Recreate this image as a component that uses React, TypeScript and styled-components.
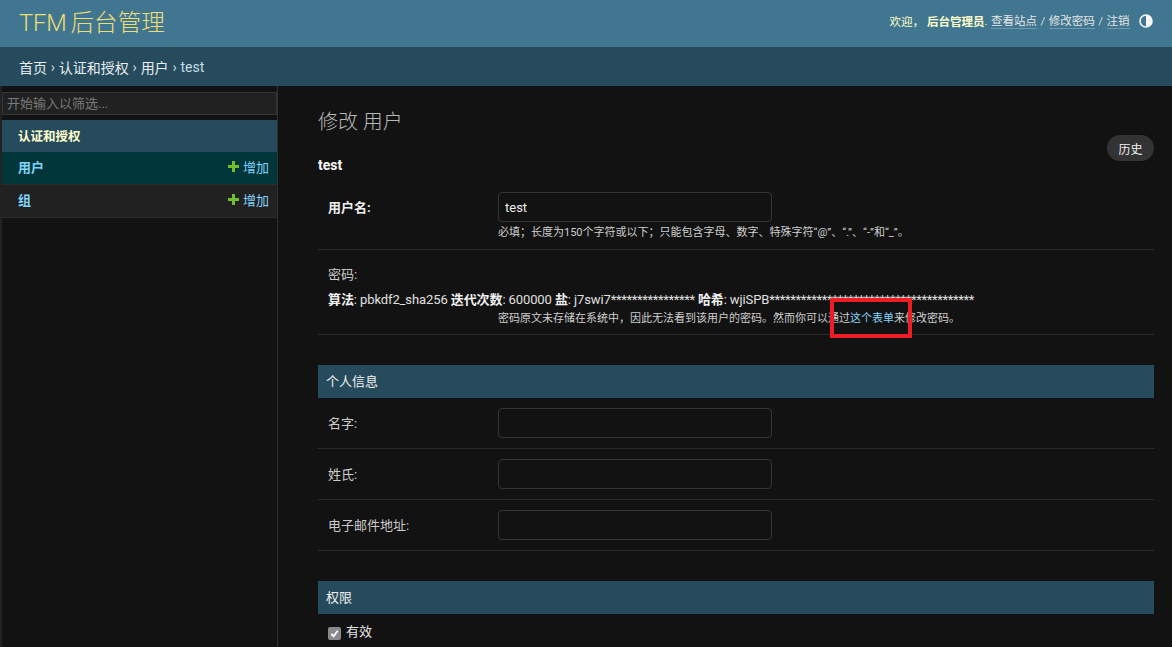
import React from "react";
import styled, { createGlobalStyle } from "styled-components";

const Global = createGlobalStyle`
  html, body { margin: 0; padding: 0; height: 100%; background: #121212; overflow: hidden; }
  body { font-family: Roboto, "Noto Sans CJK SC", "Liberation Sans", sans-serif; font-size: 14px; color: #eeeeee; }
  * { box-sizing: border-box; }
`;
const Page = styled.div`position: relative; width: 1172px; height: 647px; overflow: hidden; display: flex; flex-direction: column;`;
const Header = styled.header`
  height: 47px; flex: none; background: #417690; display: flex; align-items: center; justify-content: space-between;
  padding: 0 19px;
`;
const Brand = styled.div`font-size: 23.6px; font-weight: 300; color: #f0dd75; line-height: 47px; word-spacing: -2px;`;
const UserTools = styled.div`display: flex; align-items: center; font-size: 11.5px; color: #ffc; padding-bottom: 5px;`;
const UserStrong = styled.strong`font-weight: 700; margin-left: 3px;`;
const ToolLink = styled.a`color: #e6e6e6; border-bottom: 1px solid rgba(255,255,255,0.25); line-height: 14px; margin: 0 3.5px;`;
const Sep = styled.span`color: #ddd;`;
const ThemeIcon = styled.svg`width: 14px; height: 14px; margin-left: 6px;`;
const Crumbs = styled.nav`height: 39px; flex: none; background: #264b5d; padding: 0 19px; display: flex; align-items: center; font-size: 14px; color: #c4dce8; gap: 3.8px;`;
const CrumbLink = styled.a`color: #e8eef2;`;
const Body = styled.div`flex: 1; display: flex; min-height: 0;`;
const Sidebar = styled.aside`width: 278px; flex: none; padding: 6px 0 0; border-left: 2px solid #222222; border-right: 1px solid #2f2f2f; background: #121212;`;
const Filter = styled.input`
  display: block; width: 275px; height: 23px; background: #212121; border: 1px solid #353535; color: #eee;
  padding: 0 4px; font: inherit; font-size: 13px; margin-bottom: 5px; outline: none;
  &::placeholder { color: #7a7a7a; opacity: 1; }
`;
const Caption = styled.div`height: 32px; background: #264b5d; padding: 0 16px 1px; display: flex; align-items: center; font-size: 12.5px; font-weight: 700; color: #ffffcc;`;
const ModelRow = styled.div<{ $current?: boolean }>`
  height: 33px; display: flex; align-items: center; justify-content: space-between;
  padding: 0 8px 3px 16px; background: ${p => (p.$current ? "#00363a" : "#212121")};
  border-bottom: 1px solid #2b2b2b;
`;
const ModelName = styled.a`font-size: 13px; font-weight: 700; color: #81d4fa;`;
const AddLink = styled.a`display: flex; align-items: center; gap: 4px; font-size: 13px; color: #81d4fa;`;
const PlusIcon = styled.svg`width: 11px; height: 11px; margin-top: -1px;`;
const Main = styled.main`flex: 1; padding: 22px 18px 0 40px; min-width: 0;`;
const Title = styled.h1`margin: 0; font-size: 20px; font-weight: 300; color: #b8b8b8; line-height: 28px;`;
const TitleBar = styled.div`display: flex; align-items: flex-start; justify-content: space-between; margin-top: 1px; height: 43px;`;
const ObjectName = styled.h2`margin: 18px 0 0; font-size: 14px; font-weight: 700; color: #f7f7f7; line-height: 20px;`;
const HistoryButton = styled.a`
  width: 47px; height: 26px; border-radius: 13px; background: #333333; color: #f2f2f2; font-size: 12px;
  display: flex; align-items: center; justify-content: center; margin-top: -2px;
`;
const Row = styled.div<{ $h: number }>`
  height: ${p => p.$h}px; border-bottom: 1px solid #2b2b2b; padding: 10px 10px 0; display: flex; align-items: flex-start;
`;
const FirstRow = styled(Row)`padding-top: 12px;`;
const Label = styled.label<{ $bold?: boolean }>`
  width: 170px; flex: none; font-size: 13px; line-height: 31px; color: ${p => (p.$bold ? "#eeeeee" : "#cccccc")}; font-weight: ${p => (p.$bold ? 700 : 400)};
`;
const FieldStack = styled.div`display: flex; flex-direction: column;`;
const TextInput = styled.input`
  width: 274px; height: 30px; background: #121212; border: 1px solid #353535; border-radius: 4px; color: #eeeeee;
  padding: 1px 6px 0; font: inherit; font-size: 13px; outline: none; display: block;
`;
const Help = styled.div`font-size: 11px; line-height: 13px; color: #cfcfcf; white-space: nowrap;`;
const HelpBelow = styled(Help)`margin-top: 4px;`;
const PasswordRow = styled.div`height: 85px; border-bottom: 1px solid #2b2b2b; padding: 15px 10px 0; display: flex; flex-direction: column;`;
const PasswordLabel = styled.div`font-size: 13px; line-height: 20px; color: #cccccc;`;
const HashLine = styled.div`font-size: 13px; line-height: 18px; color: #e0e0e0; margin-top: 6px; white-space: nowrap; letter-spacing: -0.1px; strong { color: #f0f0f0; }`;
const Stars = styled.span`letter-spacing: -0.35px;`;
const PasswordHelp = styled(Help)`margin: 3px 0 0 170px;`;
const HelpLink = styled.a`color: #81d4fa;`;
const Fieldset = styled.section`margin-top: 30px;`;
const Legend = styled.h2`margin: 0; height: 33px; background: #264b5d; color: #f2f2f2; font-size: 13px; font-weight: 400; padding: 0 8px 2px; display: flex; align-items: center;`;
const CheckRow = styled.div`display: flex; align-items: center; gap: 5px; padding: 7px 10px 0; font-size: 13px; color: #e6e6e6;`;
const CheckBox = styled.span`width: 13px; height: 13px; border-radius: 2px; background: #8a8a8a; display: flex; align-items: center; justify-content: center; margin-top: 5px;`;
const Annotation = styled.div`position: absolute; left: 830px; top: 298px; width: 82px; height: 40px; border: 4px solid #ee1c25; pointer-events: none;`;

const Plus = () => (
  <PlusIcon viewBox="0 0 11 11"><path d="M4 0h3v4h4v3H7v4H4V7H0V4h4z" fill="#70bf2b" /></PlusIcon>
);

export default function App() {
  return (
    <Page>
      <Global />
      <Header>
        <Brand>TFM 后台管理</Brand>
        <UserTools>
          <span>欢迎，</span>
          <UserStrong>后台管理员</UserStrong>
          <span>.</span>
          <ToolLink>查看站点</ToolLink><Sep>/</Sep>
          <ToolLink>修改密码</ToolLink><Sep>/</Sep>
          <ToolLink>注销</ToolLink>
          <ThemeIcon viewBox="0 0 14 14">
            <circle cx="7" cy="7" r="6" fill="none" stroke="#f5f5f5" strokeWidth="1.6" />
            <path d="M7 1a6 6 0 0 1 0 12z" fill="#f5f5f5" />
          </ThemeIcon>
        </UserTools>
      </Header>
      <Crumbs>
        <CrumbLink>首页</CrumbLink><span>›</span>
        <CrumbLink>认证和授权</CrumbLink><span>›</span>
        <CrumbLink>用户</CrumbLink><span>›</span>
        <span>test</span>
      </Crumbs>
      <Body>
        <Sidebar>
          <Filter placeholder="开始输入以筛选..." />
          <Caption>认证和授权</Caption>
          <ModelRow $current>
            <ModelName>用户</ModelName>
            <AddLink><Plus />增加</AddLink>
          </ModelRow>
          <ModelRow>
            <ModelName>组</ModelName>
            <AddLink><Plus />增加</AddLink>
          </ModelRow>
        </Sidebar>
        <Main>
          <Title>修改 用户</Title>
          <TitleBar>
            <ObjectName>test</ObjectName>
            <HistoryButton>历史</HistoryButton>
          </TitleBar>
          <FirstRow $h={70}>
            <Label $bold>用户名:</Label>
            <FieldStack>
              <TextInput defaultValue="test" />
              <HelpBelow>必填；长度为150个字符或以下；只能包含字母、数字、特殊字符“@”、“.”、“-”和“_”。</HelpBelow>
            </FieldStack>
          </FirstRow>
          <PasswordRow>
            <PasswordLabel>密码:</PasswordLabel>
            <HashLine>
              <strong>算法</strong>: pbkdf2_sha256 <strong>迭代次数</strong>: 600000 <strong>盐</strong>: j7swi7<Stars>****************</Stars> <strong>哈希</strong>: wjiSPB<Stars>***************************************</Stars>
            </HashLine>
            <PasswordHelp>
              密码原文未存储在系统中，因此无法看到该用户的密码。然而你可以通过<HelpLink>这个表单</HelpLink>来修改密码。
            </PasswordHelp>
          </PasswordRow>
          <Fieldset>
            <Legend>个人信息</Legend>
            <Row $h={51}><Label>名字:</Label><TextInput /></Row>
            <Row $h={51}><Label>姓氏:</Label><TextInput /></Row>
            <Row $h={51}><Label>电子邮件地址:</Label><TextInput /></Row>
          </Fieldset>
          <Fieldset>
            <Legend>权限</Legend>
            <CheckRow>
              <CheckBox>
                <svg viewBox="0 0 12 12" width="11" height="11"><path d="M2.5 6.5 5 9l4.5-6" fill="none" stroke="#fff" strokeWidth="2" /></svg>
              </CheckBox>
              有效
            </CheckRow>
          </Fieldset>
        </Main>
      </Body>
      <Annotation />
    </Page>
  );
}
